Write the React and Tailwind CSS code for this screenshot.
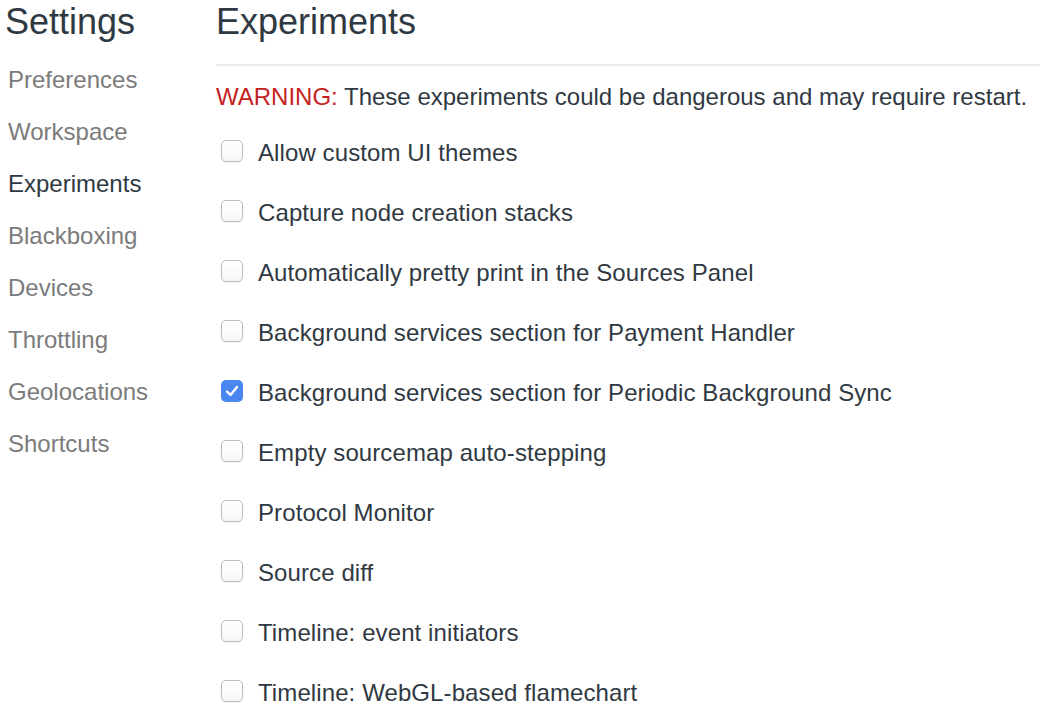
const sections = [
  'Preferences',
  'Workspace',
  'Experiments',
  'Blackboxing',
  'Devices',
  'Throttling',
  'Geolocations',
  'Shortcuts',
];

const experiments = [
  { label: 'Allow custom UI themes', checked: false },
  { label: 'Capture node creation stacks', checked: false },
  { label: 'Automatically pretty print in the Sources Panel', checked: false },
  { label: 'Background services section for Payment Handler', checked: false },
  { label: 'Background services section for Periodic Background Sync', checked: true },
  { label: 'Empty sourcemap auto-stepping', checked: false },
  { label: 'Protocol Monitor', checked: false },
  { label: 'Source diff', checked: false },
  { label: 'Timeline: event initiators', checked: false },
  { label: 'Timeline: WebGL-based flamechart', checked: false },
];

function Checkbox({ checked }) {
  if (checked) {
    return (
      <span className="flex h-[22px] w-[22px] shrink-0 items-center justify-center rounded-[5px] bg-[#4a86f0]">
        <svg width="14" height="12" viewBox="0 0 14 12" fill="none">
          <path d="M2 6.5 L5.5 10 L12 2" stroke="white" strokeWidth="2.4" strokeLinecap="round" strokeLinejoin="round" />
        </svg>
      </span>
    );
  }
  return (
    <span className="block h-[22px] w-[22px] shrink-0 rounded-[5px] border border-[#bcbcbc] bg-gradient-to-b from-white to-[#f7f7f7] shadow-[0_1px_1px_rgba(0,0,0,0.06)]" />
  );
}

export default function App() {
  return (
    <div className="flex min-h-[715px] bg-white font-['Liberation_Sans',Arial,sans-serif] text-[#303942]">
      <aside className="w-[216px] shrink-0">
        <h1 className="pl-[5px] text-[36px] leading-[44px]">Settings</h1>
        <ul className="mt-[10px]">
          {sections.map((s) => (
            <li
              key={s}
              className={
                'pl-[8px] text-[24px] leading-[52px] ' +
                (s === 'Experiments' ? 'text-[#303942]' : 'text-[#7b7b7b]')
              }
            >
              {s}
            </li>
          ))}
        </ul>
      </aside>

      <main className="flex-1">
        <h2 className="text-[36px] leading-[44px]">Experiments</h2>
        <div className="mt-[20px] h-[2px] bg-[#ebebeb]" />
        <p className="mt-[16px] text-[24px] leading-[30px]">
          <span className="text-[#c5221f]">WARNING:</span> These experiments could be dangerous and may require restart.
        </p>
        <div className="mt-[11px]">
          {experiments.map((e) => (
            <label key={e.label} className="flex h-[60px] items-center gap-[15px] pl-[5px] text-[24px] tracking-[0.1px]">
              <span className="-mt-[4px] flex shrink-0">
                <Checkbox checked={e.checked} />
              </span>
              <span>{e.label}</span>
            </label>
          ))}
        </div>
      </main>
    </div>
  );
}
